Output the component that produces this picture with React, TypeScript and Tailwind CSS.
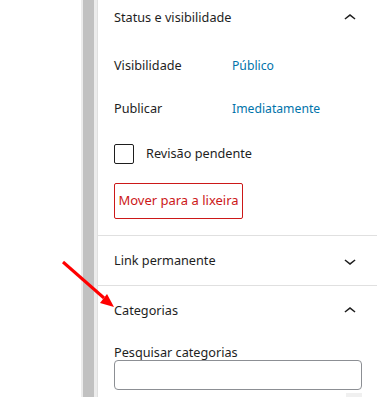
const FONT = { fontFamily: '"Noto Sans", "Open Sans", sans-serif' };

function Chevron({ up }: { up?: boolean }) {
  return (
    <svg width="24" height="24" viewBox="0 0 24 24" className="shrink-0 fill-[#1e1e1e]">
      {up ? (
        <path d="M6.5 12.4L12 8l5.5 4.4-.9 1.2L12 10l-4.6 3.6-1-1.2z" />
      ) : (
        <path d="M17.5 11.6L12 16l-5.5-4.4.9-1.2L12 14l4.6-3.6 1 1.2z" />
      )}
    </svg>
  );
}

export default function App() {
  return (
    <div
      className="relative flex w-[377px] h-[397px] overflow-hidden bg-white text-[12.7px] text-[#1e1e1e]"
      style={FONT}
    >
      {/* empty editor area */}
      <div className="w-[81px] shrink-0" />

      {/* scrollbar */}
      <div className="w-[16px] shrink-0 bg-[#ececec] px-[2px]">
        <div className="h-full w-[11px] bg-[#c1c1c1]" />
      </div>

      {/* sidebar */}
      <div className="flex-1 border-l border-[#e0e0e0]">
        {/* Status e visibilidade */}
        <div className="pl-4 pr-[15px] pb-4">
          <div className="flex h-9 items-center justify-between">
            <span>Status e visibilidade</span>
            <Chevron up />
          </div>
          <div className="mt-[12px] flex h-9 items-center">
            <span className="w-[118px]">Visibilidade</span>
            <span className="text-[#0073aa] text-[12.2px]">Público</span>
          </div>
          <div className="mt-[7px] flex h-9 items-center">
            <span className="w-[118px]">Publicar</span>
            <span className="text-[#0073aa] text-[12.2px]">Imediatamente</span>
          </div>
          <div className="mt-[17px] flex h-5 items-center gap-3">
            <span className="h-5 w-5 rounded-[2px] border border-[#1e1e1e]" />
            <span>Revisão pendente</span>
          </div>
          <button className="mt-[19px] flex h-9 w-[129px] items-center justify-center rounded-[2px] border border-[#cc1818] text-[13px] text-[#cc1818]">
            Mover para a lixeira
          </button>
        </div>

        {/* Link permanente */}
        <div className="border-t border-[#e0e0e0] pl-4 pr-[15px]">
          <div className="flex h-[49px] items-center justify-between">
            <span>Link permanente</span>
            <Chevron />
          </div>
        </div>

        {/* Categorias */}
        <div className="border-t border-[#e0e0e0] pl-4 pr-[15px]">
          <div className="flex h-[49px] items-center justify-between">
            <span>Categorias</span>
            <Chevron up />
          </div>
          <div className="mt-[9px] h-4 leading-4">Pesquisar categorias</div>
          <div className="h-[30px] rounded-[4px] border border-[#8c8f94]" />
          <div className="mt-[3px] ml-auto h-4 w-4 bg-[#f0f0f0]" />
        </div>
      </div>

      {/* annotation arrow */}
      <svg className="pointer-events-none absolute left-0 top-0" width="377" height="397">
        <line x1="63" y1="262" x2="104" y2="298" stroke="#ff0000" strokeWidth="3" />
        <polygon points="114,307 100,303 107,294" fill="#ff0000" />
      </svg>
    </div>
  );
}
